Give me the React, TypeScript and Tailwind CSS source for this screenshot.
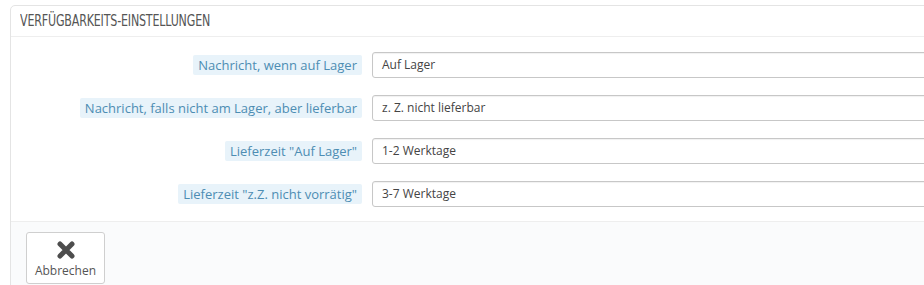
import React from 'react';

type Field = { label: string; value: string };

const fields: Field[] = [
  { label: 'Nachricht, wenn auf Lager', value: 'Auf Lager' },
  { label: 'Nachricht, falls nicht am Lager, aber lieferbar', value: 'z. Z. nicht lieferbar' },
  { label: 'Lieferzeit "Auf Lager"', value: '1-2 Werktage' },
  { label: 'Lieferzeit "z.Z. nicht vorrätig"', value: '3-7 Werktage' },
];

const CloseIcon: React.FC = () => (
  <svg width="20" height="20" viewBox="0 0 20 20" aria-hidden="true">
    <path d="M4 4 L16 16 M16 4 L4 16" stroke="#4d4d4d" strokeWidth="5" strokeLinecap="round" fill="none" />
  </svg>
);

const App: React.FC = () => {
  return (
    <div className="w-[924px] h-[285px] overflow-hidden bg-white pt-[5px] pl-[10px] font-['Open_Sans',sans-serif]">
      <div className="w-[1000px] min-h-[300px] border border-[#e4e4e4] rounded-tl-[5px] bg-white">
        <div className="h-[31px] pl-[9px] flex items-center border-b border-[#eeeeee]">
          <h3 className="inline-block origin-left scale-x-[0.82] text-[15px] text-[#555] tracking-[-0.2px] font-['DejaVu_Sans_Condensed','Roboto',sans-serif] leading-none mt-[1px] whitespace-nowrap">
            VERFÜGBARKEITS-EINSTELLUNGEN
          </h3>
        </div>

        <div className="pt-[15px] pb-[14px] flex flex-col gap-[17px]">
          {fields.map((f) => (
            <div key={f.label} className="flex items-center">
              <div className="w-[351px] flex justify-end">
                <span className="bg-[#e8f3fa] text-[#4d8db3] text-[13px] leading-[20px] px-[5px] rounded-[2px]">
                  {f.label}
                </span>
              </div>
              <div className="ml-[10px] w-[600px] h-[26px] border border-[#c7c7c7] rounded-[3px] bg-white shadow-[inset_0_1px_1px_rgba(0,0,0,0.06)] flex items-center pl-[9px] text-[12px] text-[#444]">
                {f.value}
              </div>
            </div>
          ))}
        </div>

        <div className="bg-[#fafbfc] border-t border-[#eeeeee] pt-[10px] pl-[15px] h-[80px]">
          <button className="w-[79px] h-[52px] border border-[#cfcfcf] rounded-[3px] bg-white flex flex-col items-center pt-[7px] text-[12px] text-[#555] leading-none">
            <CloseIcon />
            <span className="mt-[5px]">Abbrechen</span>
          </button>
        </div>
      </div>
    </div>
  );
};

export default App;
